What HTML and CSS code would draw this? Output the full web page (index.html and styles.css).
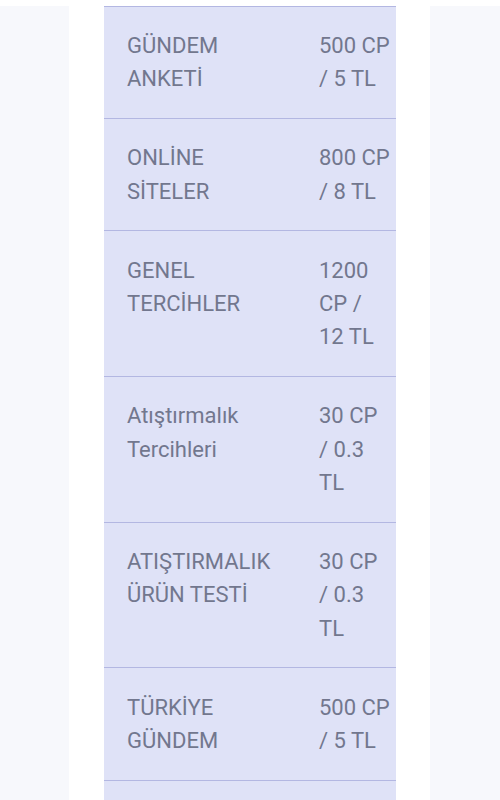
FILE: index.html
```html
<!DOCTYPE html>
<html lang="tr">
<head>
<meta charset="utf-8">
<link rel="stylesheet" href="styles.css">
</head>
<body>
<div class="page">
  <div class="side side-left"></div>
  <div class="gap"></div>
  <div class="center">
    <table class="prices">
      <colgroup><col class="c1"><col class="c2"></colgroup>
      <tbody>
        <tr><td>GÜNDEM ANKETİ</td><td class="price">500 CP / 5 TL</td></tr>
        <tr><td>ONLİNE SİTELER</td><td class="price">800 CP / 8 TL</td></tr>
        <tr><td>GENEL TERCİHLER</td><td class="price">1200 CP / 12 TL</td></tr>
        <tr><td>Atıştırmalık Tercihleri</td><td class="price">30 CP / 0.3 TL</td></tr>
        <tr><td>ATIŞTIRMALIK ÜRÜN TESTİ</td><td class="price">30 CP / 0.3 TL</td></tr>
        <tr><td>TÜRKİYE GÜNDEM</td><td class="price">500 CP / 5 TL</td></tr>
        <tr><td>GÜNDEM ANKETİ</td><td class="price">500 CP / 5 TL</td></tr>
      </tbody>
    </table>
  </div>
  <div class="gap"></div>
  <div class="side side-right"></div>
</div>
</body>
</html>
```
FILE: styles.css
```css
html, body {
  margin: 0;
  padding: 0;
  background: #ffffff;
  height: 100%;
  overflow: hidden;
}
.page {
  display: grid;
  grid-template-columns: 69px 35px 292px 34px 70px;
  padding-top: 5.7px;
  height: 794px;
  font-family: Roboto, "Liberation Sans", sans-serif;
}
.side {
  background: #f7f8fc;
  height: 100%;
}
.center {
  overflow: hidden;
  background: #dfe2f7;
}
.prices {
  width: 292px;
  table-layout: fixed;
  border-collapse: collapse;
  background: #dfe2f7;
  border-top: 1px solid #b3b7e2;
}
.c1 { width: 192px; }
.c2 { width: 100px; }
.prices td {
  padding: 22.25px 20px 22.25px 23px;
  font-size: 22px;
  line-height: 33.4px;
  color: #72778e;
  vertical-align: top;
  border-bottom: 1px solid #b3b7e2;
}
.prices td.price {
  padding-right: 5.5px;
}
```
